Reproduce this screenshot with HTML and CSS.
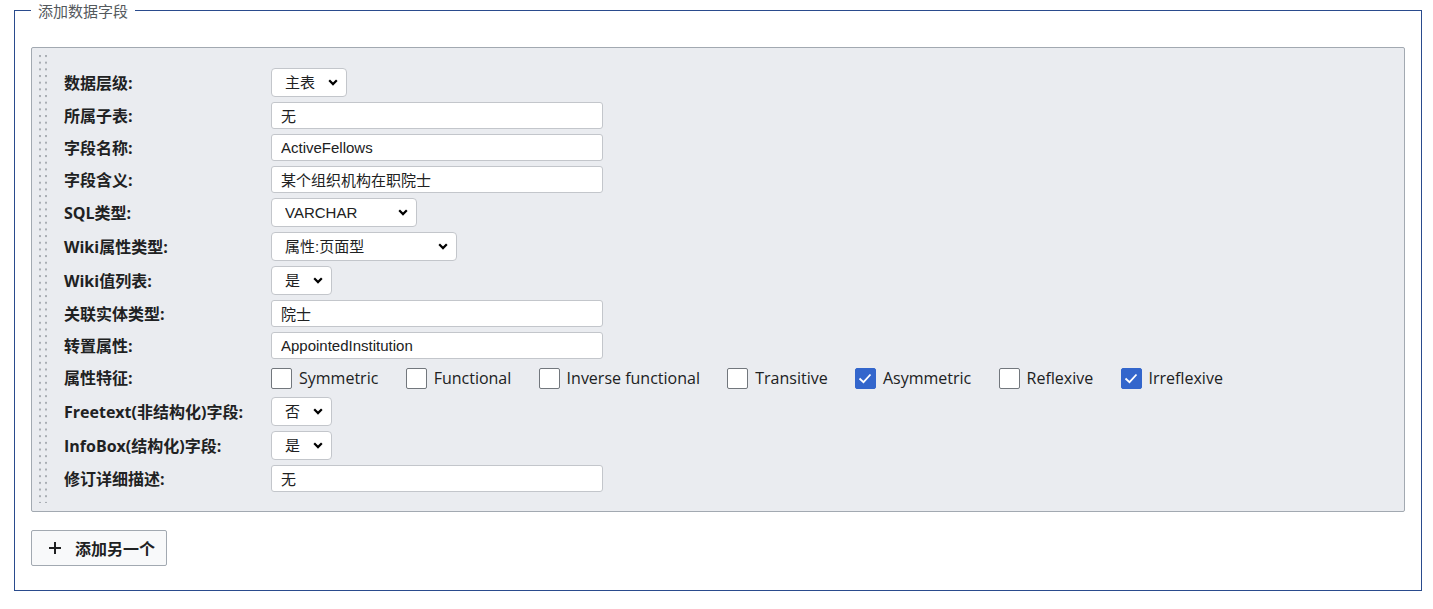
FILE: index.html
```html
<!DOCTYPE html>
<html lang="zh">
<head>
<meta charset="utf-8">
<title>添加数据字段</title>
<link rel="stylesheet" href="styles.css">
</head>
<body>
<fieldset class="fs">
  <legend class="fs-legend">添加数据字段</legend>
  <div class="panel">
    <div class="handle">
      <svg class="handle-svg" width="8" height="100%" aria-hidden="true">
        <defs>
          <pattern id="dots" patternUnits="userSpaceOnUse" width="6" height="6.67">
            <rect x="0" y="0" width="2" height="2" fill="#a9aeb4"/>
          </pattern>
        </defs>
        <rect x="0" y="0" width="8" height="100%" fill="url(#dots)"/>
      </svg>
    </div>
    <div class="form">
      <div class="lbl">数据层级:</div>
      <div class="ctl"><select class="sel w76"><option>主表</option></select></div>

      <div class="lbl">所属子表:</div>
      <div class="ctl"><input class="txt" type="text" value="无"></div>

      <div class="lbl">字段名称:</div>
      <div class="ctl"><input class="txt" type="text" value="ActiveFellows"></div>

      <div class="lbl">字段含义:</div>
      <div class="ctl"><input class="txt" type="text" value="某个组织机构在职院士"></div>

      <div class="lbl">SQL类型:</div>
      <div class="ctl"><select class="sel w146"><option>VARCHAR</option></select></div>

      <div class="lbl">Wiki属性类型:</div>
      <div class="ctl"><select class="sel w186"><option>属性:页面型</option></select></div>

      <div class="lbl">Wiki值列表:</div>
      <div class="ctl"><select class="sel w61"><option>是</option></select></div>

      <div class="lbl">关联实体类型:</div>
      <div class="ctl"><input class="txt" type="text" value="院士"></div>

      <div class="lbl">转置属性:</div>
      <div class="ctl"><input class="txt" type="text" value="AppointedInstitution"></div>

      <div class="lbl">属性特征:</div>
      <div class="ctl checks">
        <label class="chk"><input type="checkbox" class="cb"><span>Symmetric</span></label>
        <label class="chk"><input type="checkbox" class="cb"><span>Functional</span></label>
        <label class="chk"><input type="checkbox" class="cb"><span>Inverse functional</span></label>
        <label class="chk"><input type="checkbox" class="cb"><span>Transitive</span></label>
        <label class="chk"><input type="checkbox" class="cb" checked><span>Asymmetric</span></label>
        <label class="chk"><input type="checkbox" class="cb"><span>Reflexive</span></label>
        <label class="chk"><input type="checkbox" class="cb" checked><span>Irreflexive</span></label>
      </div>

      <div class="lbl">Freetext(非结构化)字段:</div>
      <div class="ctl"><select class="sel w61"><option>否</option></select></div>

      <div class="lbl">InfoBox(结构化)字段:</div>
      <div class="ctl"><select class="sel w61"><option>是</option></select></div>

      <div class="lbl">修订详细描述:</div>
      <div class="ctl"><input class="txt" type="text" value="无"></div>
    </div>
  </div>
  <button class="add-btn" type="button">
    <svg class="plus" width="14" height="14" viewBox="0 0 14 14" aria-hidden="true">
      <path d="M7 1v12M1 7h12" stroke="#202122" stroke-width="2" fill="none"/>
    </svg>
    <span>添加另一个</span>
  </button>
</fieldset>
</body>
</html>
```

FILE: styles.css
```css
* { box-sizing: border-box; }

html, body {
  margin: 0;
  padding: 0;
  background: #ffffff;
  color: #202122;
  font-family: "Open Sans", "Noto Sans CJK SC", sans-serif;
}

.fs {
  width: 1408px;
  margin: 0 0 0 14px;
  padding: 26px 16px 24px 16px;
  border: 1px solid #2a4b8d;
  min-width: 0;
}

.fs-legend {
  padding: 0 7px;
  font-family: "Noto Sans CJK SC", sans-serif;
  font-size: 15px;
  line-height: 21px;
  color: #54595d;
}

.panel {
  display: flex;
  background: #eaecf0;
  border: 1px solid #a2a9b1;
  border-radius: 2px;
  padding: 7px 0 8px 7px;
}

.handle {
  width: 8px;
  flex: 0 0 8px;
  display: flex;
}

.handle-svg {
  display: block;
  height: 100%;
}

.form {
  flex: 1;
  margin-left: 17px;
  padding: 13px 0 11px 0;
  display: grid;
  grid-template-columns: 207px 1fr;
  row-gap: 5px;
  align-items: center;
}

.lbl {
  font-family: "Open Sans", "Noto Sans CJK SC", sans-serif;
  font-weight: 700;
  font-size: 16px;
  line-height: 20px;
  color: #202122;
  white-space: nowrap;
}

.ctl {
  display: flex;
  align-items: center;
}

.txt {
  width: 332px;
  height: 27px;
  margin: 0;
  padding: 0 9px;
  border: 1px solid #c3c6cb;
  border-radius: 3px;
  background: #ffffff;
  color: #202122;
  font-family: "Liberation Sans", "Noto Sans CJK SC", sans-serif;
  font-size: 15px;
}

.sel {
  -webkit-appearance: none;
  appearance: none;
  height: 29px;
  margin: 0;
  padding: 0 24px 0 13px;
  border: 1px solid #c3c6cb;
  border-radius: 4px;
  background-color: #ffffff;
  background-image: url("data:image/svg+xml,%3Csvg xmlns='http://www.w3.org/2000/svg' width='10' height='7' viewBox='0 0 10 7'%3E%3Cpath d='M1.2 1.3 L5 5.1 L8.8 1.3' fill='none' stroke='%23000' stroke-width='2.2'/%3E%3C/svg%3E");
  background-repeat: no-repeat;
  background-position: right 8px center;
  color: #202122;
  font-family: "Liberation Sans", "Noto Sans CJK SC", sans-serif;
  font-size: 15px;
}

.w61 { width: 61px; }
.w76 { width: 76px; }
.w146 { width: 146px; }
.w186 { width: 186px; }

.checks {
  height: 28px;
}

.chk {
  display: inline-flex;
  align-items: center;
  gap: 7px;
  margin-right: 27.3px;
  font-family: "Open Sans", "Noto Sans CJK SC", sans-serif;
  font-size: 16px;
  line-height: 20px;
  color: #202122;
  white-space: nowrap;
}

.cb {
  -webkit-appearance: none;
  appearance: none;
  width: 21px;
  height: 21px;
  margin: 0;
  border: 1px solid #72777d;
  border-radius: 2px;
  background: #ffffff;
}

.cb:checked {
  background-color: #3366cc;
  border-color: #3366cc;
  background-image: url("data:image/svg+xml,%3Csvg xmlns='http://www.w3.org/2000/svg' width='21' height='21' viewBox='0 0 21 21'%3E%3Cpath d='M4.5 10.5 L8.5 14.2 L15.5 6.5' fill='none' stroke='%23fff' stroke-width='1.8'/%3E%3C/svg%3E");
  background-repeat: no-repeat;
  background-position: center;
}

.add-btn {
  display: inline-flex;
  align-items: center;
  gap: 13px;
  margin-top: 18px;
  height: 36px;
  width: 136px;
  padding: 0 0 0 16px;
  border: 1px solid #a2a9b1;
  border-radius: 2px;
  background: #f8f9fa;
  color: #202122;
  font-family: "Noto Sans CJK SC", sans-serif;
  font-weight: 700;
  font-size: 16px;
  line-height: 20px;
}

.plus {
  display: block;
  flex: 0 0 14px;
}
```
